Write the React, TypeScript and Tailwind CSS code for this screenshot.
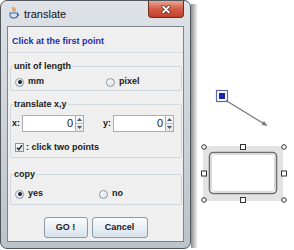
import React from "react";

function Radio({ checked }: { checked?: boolean }) {
  return (
    <span className="w-[9px] h-[9px] shrink-0 rounded-full border border-[#8a96a2] bg-linear-to-br from-white to-[#d9e0e6] flex items-center justify-center">
      {checked && <span className="w-[4px] h-[4px] rounded-full bg-[#1d2630]" />}
    </span>
  );
}

function Spinner({ w }: { w: string }) {
  return (
    <div className="flex h-[17px]">
      <div className={`${w} h-full bg-white border border-[#a9b0b8] text-right pr-[2px] text-[11px] leading-[15px] font-normal text-[#222]`}>0</div>
      <div className="w-[8px] h-full flex flex-col border border-l-0 border-[#a9b0b8] bg-linear-to-b from-[#f7f8f9] to-[#e3e7ea]">
        <div className="h-1/2 flex items-center justify-center border-b border-[#b9c0c6]">
          <svg width="5" height="3" viewBox="0 0 5 3"><path d="M0 3 L2.5 0 L5 3Z" fill="#4a5560" /></svg>
        </div>
        <div className="h-1/2 flex items-center justify-center">
          <svg width="5" height="3" viewBox="0 0 5 3"><path d="M0 0 L2.5 3 L5 0Z" fill="#4a5560" /></svg>
        </div>
      </div>
    </div>
  );
}

export default function App() {
  return (
    <div className="w-[294px] h-[250px] bg-white flex overflow-hidden font-['Liberation_Sans',Arial,sans-serif] text-[#1b1b1b]">
      {/* dialog window */}
      <div className="w-[191px] h-[249px] shrink-0 flex flex-col rounded-[7px] border border-[#50575f] bg-linear-to-b from-[#dfe3e7] to-[#bcc3ca] px-[6px] pb-[6px]">
        {/* title bar */}
        <div className="h-[25px] flex items-start">
          <svg className="ml-[1px] mt-[5px]" width="12" height="13" viewBox="0 0 12 13">
            <path d="M5 1 C3.5 2.5 6.5 3.5 5 5.5 M7 1.5 C6 3 8 3.5 7 5.5" stroke="#e07a2a" strokeWidth="1.1" fill="none" />
            <path d="M2 7 H9.5 V9 C9.5 11 8 12 6 12 H5.5 C3.5 12 2 11 2 9 Z" fill="none" stroke="#3a66a8" strokeWidth="1.1" />
            <path d="M9.5 8 C11.5 8 11.5 10 9.2 10" fill="none" stroke="#3a66a8" strokeWidth="1" />
          </svg>
          <span className="ml-[4px] mt-[6px] text-[11px] leading-[14px] text-[#111]">translate</span>
          <div className="ml-auto w-[36px] h-[17px] rounded-b-[4px] border border-t-0 border-[#6e2b21] bg-linear-to-b from-[#eaa597] via-[#d45c45] to-[#c13f2a] flex items-center justify-center">
            <svg width="10" height="9" viewBox="0 0 10 9">
              <path d="M2 1.5 L8 7.5 M8 1.5 L2 7.5" stroke="#5a1e16" strokeWidth="3.2" strokeLinecap="round" />
              <path d="M2 1.5 L8 7.5 M8 1.5 L2 7.5" stroke="#ffffff" strokeWidth="1.8" strokeLinecap="round" />
            </svg>
          </div>
        </div>

        {/* content */}
        <div className="flex-1 flex flex-col border border-[#7d848c] bg-[#efefef] font-bold text-[9px]">
          <div className="h-[26px] border-b border-[#d4dbe1] pl-[4px] pt-[9px] leading-[11px] text-[#2a2aa6]">
            Click at the first point
          </div>

          <fieldset className="mt-[8px] ml-[2px] mr-[1px] border border-[#cfd8e0] rounded-[2px] px-0 pt-[5px] pb-[2px]">
            <legend className="ml-[2px] px-[1px] leading-[10px]">unit of length</legend>
            <div className="flex items-center h-[12px] pl-[4px]">
              <div className="w-[91px] flex items-center gap-[4px]"><Radio checked />mm</div>
              <div className="flex items-center gap-[4px]"><Radio />pixel</div>
            </div>
          </fieldset>

          <fieldset className="mt-[8px] ml-[2px] mr-[1px] border border-[#cfd8e0] rounded-[2px] px-0 pt-[6px] pb-[4px]">
            <legend className="ml-[2px] px-[1px] leading-[10px]">translate x,y</legend>
            <div className="flex items-center pl-[1px]">
              <span className="w-[10px]">x:</span>
              <Spinner w="w-[54px]" />
              <span className="ml-[19px] w-[10px]">y:</span>
              <Spinner w="w-[53px]" />
            </div>
            <div className="mt-[10px] h-[11px] flex items-center pl-[4px] gap-[2px]">
              <span className="w-[9px] h-[9px] border border-[#8a96a2] bg-linear-to-br from-white to-[#d9e0e6] flex items-center justify-center">
                <svg width="7" height="7" viewBox="0 0 7 7"><path d="M1 3.8 L2.8 5.6 L6 1.2" stroke="#1d2630" strokeWidth="1.4" fill="none" /></svg>
              </span>
              <span>: click two points</span>
            </div>
          </fieldset>

          <fieldset className="mt-[11px] ml-[2px] mr-[1px] border border-[#cfd8e0] rounded-[2px] px-0 pt-[9px] pb-[4px]">
            <legend className="ml-[2px] px-[1px] leading-[10px]">copy</legend>
            <div className="flex items-center h-[12px] pl-[4px]">
              <div className="w-[84px] flex items-center gap-[4px]"><Radio checked />yes</div>
              <div className="flex items-center gap-[4px]"><Radio />no</div>
            </div>
          </fieldset>

          <div className="mt-[12px] flex justify-center gap-[4px]">
            <button className="w-[44px] h-[21px] rounded-[3px] border border-[#8b98a5] bg-linear-to-b from-[#fbfcfd] to-[#d7e2ec] font-bold text-[9px] text-[#1b1b1b]">GO !</button>
            <button className="w-[56px] h-[21px] rounded-[3px] border border-[#8b98a5] bg-linear-to-b from-[#fbfcfd] to-[#d7e2ec] font-bold text-[9px] text-[#1b1b1b]">Cancel</button>
          </div>
        </div>
      </div>

      {/* window shadow */}
      <div className="w-[7px] h-[244px] mt-[4px] shrink-0 bg-linear-to-r from-[#8f8f8f] to-white" />

      {/* drawing canvas */}
      <svg width="96" height="250" viewBox="0 0 96 250">
        <rect x="18.5" y="90.5" width="11" height="11" fill="white" stroke="#5b6a9e" strokeWidth="1.2" />
        <rect x="21" y="93" width="6" height="6" fill="#1b22b8" />
        <line x1="28" y1="100.5" x2="68" y2="125" stroke="#7a7a7a" strokeWidth="1.4" />
        <path d="M69.5 126 L63.5 124.8 L66 121 Z" fill="#7a7a7a" />

        <rect x="5" y="146" width="80" height="55" fill="#e3e3e3" />
        <rect x="11.5" y="152.5" width="67" height="41" rx="4" fill="white" stroke="#6e6e6e" strokeWidth="1.6" />
        <rect x="13.5" y="154.5" width="63" height="37" rx="3" fill="none" stroke="#cfcfcf" strokeWidth="0.8" />

        {[[6, 147], [86, 147], [6, 200], [86, 200]].map(([x, y], i) => (
          <circle key={i} cx={x} cy={y} r="2.3" fill="white" stroke="#333" strokeWidth="1" />
        ))}
        {[[45, 147], [6, 173.5], [86, 173.5], [45, 200]].map(([x, y], i) => (
          <rect key={i} x={x - 2.5} y={y - 2.5} width="5" height="5" fill="white" stroke="#333" strokeWidth="1" />
        ))}
      </svg>
    </div>
  );
}
